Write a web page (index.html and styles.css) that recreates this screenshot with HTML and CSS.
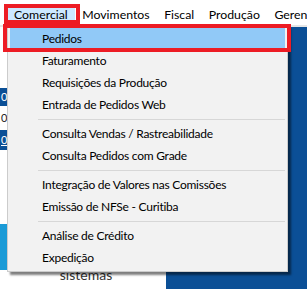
FILE: index.html
```html
<!DOCTYPE html>
<html>
<head>
    <meta charset='utf-8'>
    <title>Comercial</title>
    <link rel="stylesheet" href="styles.css">
</head>
<body>
    <div class="screen">
        <div class="topstrip"></div>
        <div class="menubar">
            <span class="menubar-item active">Comercial</span>
            <span class="menubar-item">Movimentos</span>
            <span class="menubar-item">Fiscal</span>
            <span class="menubar-item">Produção</span>
            <span class="menubar-item">Gerenc</span>
        </div>
        <div class="desk">
            <div class="desk-left">
                <div class="blk blk-white blk-a"></div>
                <div class="blk blk-blue blk-b">00</div>
                <div class="blk blk-white blk-c">0:</div>
                <div class="blk blk-blue blk-d"><u>0</u></div>
                <div class="blk blk-white blk-e"></div>
                <div class="blk blk-cyan blk-f"></div>
                <div class="brand">sistemas</div>
            </div>
            <div class="desk-right"></div>
        </div>

        <!-- dropdown -->
        <div class="dropdown">
            <div class="dd-item selected">Pedidos</div>
            <div class="dd-item">Faturamento</div>
            <div class="dd-item">Requisições da Produção</div>
            <div class="dd-item">Entrada de Pedidos Web</div>
            <div class="dd-sep"></div>
            <div class="dd-item">Consulta Vendas / Rastreabilidade</div>
            <div class="dd-item">Consulta Pedidos com Grade</div>
            <div class="dd-sep"></div>
            <div class="dd-item">Integração de Valores nas Comissões</div>
            <div class="dd-item">Emissão de NFSe - Curitiba</div>
            <div class="dd-sep"></div>
            <div class="dd-item">Análise de Crédito</div>
            <div class="dd-item">Expedição</div>
        </div>

        <!-- red marks -->
        <div class="mark mark-menu"></div>
        <div class="mark mark-item"></div>
    </div>
</body>
</html>
```

FILE: styles.css
```css
html,body,div{
    padding: 0;
    margin: 0;
}
body{
    font-family: Lato, "Noto Sans", sans-serif;
    font-size: 12px;
    color: #000;
    background: #fff;
}
.screen{
    position: relative;
    width: 307px;
    height: 289px;
    overflow: hidden;
    display: flex;
    flex-direction: column;
}
.topstrip{
    height: 5px;
    background: #fff;
}
.menubar{
    height: 20px;
    display: flex;
    padding-left: 7px;
    background: #fff;
    white-space: nowrap;
    overflow: hidden;
    font-size: 12.3px;
}
.menubar-item{
    padding: 0 7.5px 0 7px;
    line-height: 20px;
}
.menubar-item.active{
    background: #cce8ff;
}
.desk{
    flex: 1;
    display: flex;
    border-top: 2px solid #e6e6e6;
}
.desk-left{
    width: 166px;
    display: flex;
    flex-direction: column;
    background: #fff;
}
.desk-right{
    flex: 1;
    background: #0b4f96;
}
.blk{
    font-size: 11px;
    padding-left: 1px;
    overflow: hidden;
}
.blk-white{
    background: #fff;
    color: #222;
}
.blk-blue{
    background: #0b4f96;
    color: #fff;
}
.blk-cyan{
    background: #1b9bd7;
}
.blk-a{ height: 61px; }
.blk-b{ height: 18px; line-height: 18px; }
.blk-c{ height: 24px; line-height: 24px; }
.blk-d{ height: 20px; line-height: 20px; }
.blk-e{ height: 74px; }
.blk-f{ height: 46px; width: 8px; }
.brand{
    font-size: 14px;
    color: #333;
    text-align: center;
    line-height: 12px;
    height: 12px;
    margin-top: -1px;
    padding-left: 6px;
}

.dropdown{
    position: absolute;
    left: 7px;
    top: 25px;
    width: 275px;
    padding: 2px;
    background: #f2f2f2;
    border: 1px solid #cccccc;
    box-shadow: 3px 3px 2px rgba(0,0,0,0.5);
}
.dd-item{
    height: 22px;
    line-height: 22px;
    padding-left: 32px;
    white-space: nowrap;
    letter-spacing: -0.25px;
}
.dd-item.selected{
    background: #91c9f7;
}
.dd-sep{
    height: 7px;
    margin-left: 28px;
    display: flex;
    align-items: center;
}
.dd-sep::after{
    content: "";
    flex: 1;
    height: 1px;
    background: #d7d7d7;
}

.mark{
    position: absolute;
    border: 4px solid #ed1c24;
}
.mark-menu{
    left: 4px;
    top: 4px;
    width: 68px;
    height: 12px;
}
.mark-item{
    left: 3px;
    top: 24px;
    width: 280px;
    height: 20px;
}
```
